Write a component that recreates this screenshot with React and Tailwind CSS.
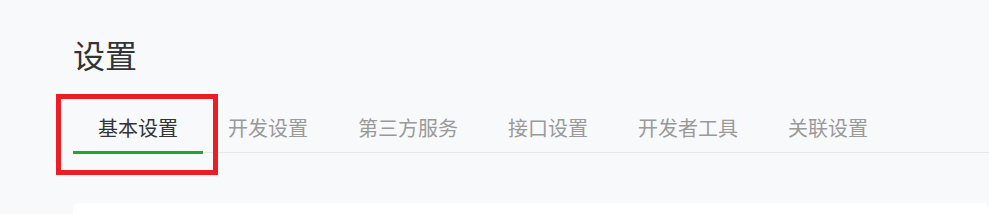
const TABS = ["基本设置", "开发设置", "第三方服务", "接口设置", "开发者工具", "关联设置"];

export default function App() {
  const active = 0;
  return (
    <div
      className="relative h-[214px] w-full overflow-hidden bg-[#f8f9fb] pl-[73px] pt-[30px]"
      style={{ fontFamily: '"Noto Sans CJK SC", "Noto Sans", sans-serif' }}
    >
      <h1 className="text-[32px] leading-[48px] font-normal text-[#333]">设置</h1>

      {/* tabs */}
      <div className="mt-[26px] flex border-b border-[#e5e7eb]">
        {TABS.map((t, i) => (
          <div
            key={t}
            className={
              "relative flex h-[48px] items-center px-[25px] text-[20px] " +
              (i === active ? "text-[#333]" : "text-[#999]")
            }
          >
            {t}
            {i === active && (
              <span className="absolute left-0 right-0 bottom-[-2px] h-[3px] bg-[#1aab2c]" />
            )}
          </div>
        ))}
      </div>

      <div className="mt-[50px] h-[100px] rounded-md bg-white" />

      {/* highlight annotation */}
      <div className="absolute left-[56px] top-[94px] h-[81px] w-[162px] border-[5px] border-[#ee1c25]" />
    </div>
  );
}
